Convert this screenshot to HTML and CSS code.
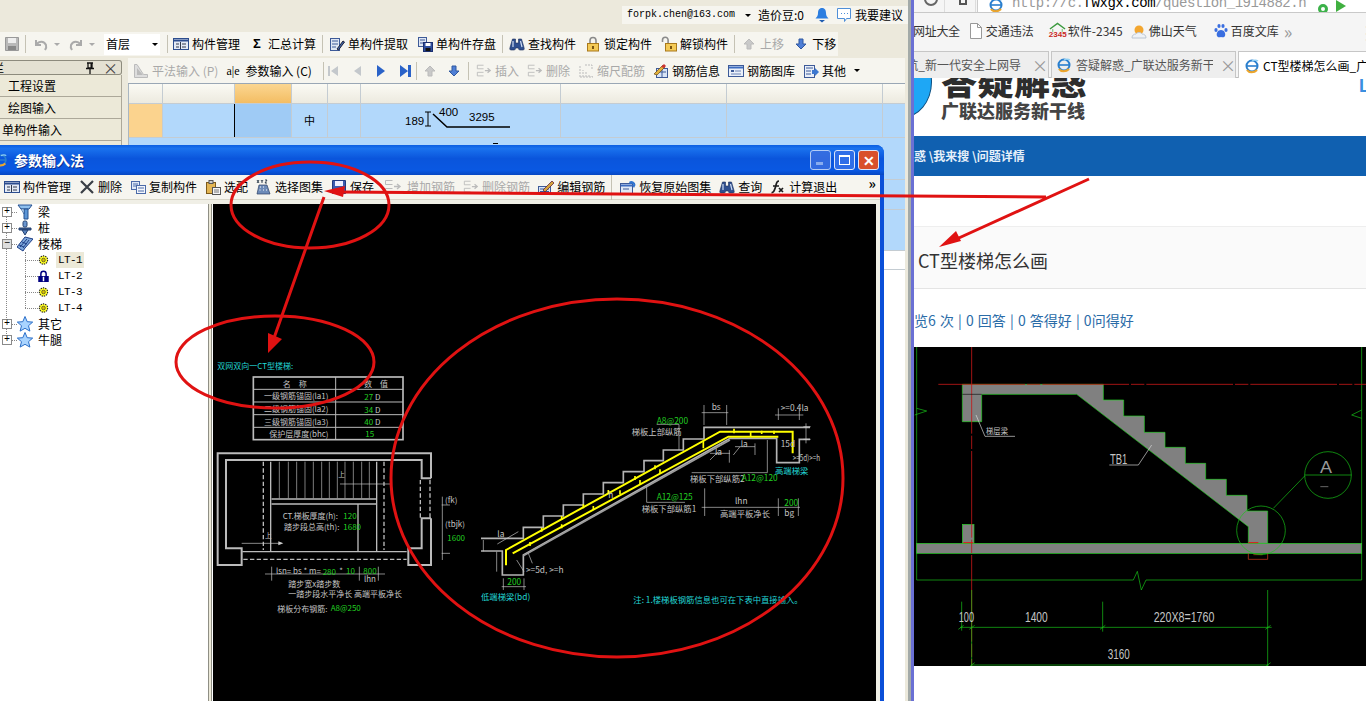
FILE: index.html
```html
<!DOCTYPE html>
<html lang="zh-CN">
<head>
<meta charset="utf-8">
<title>参数输入法</title>
<link rel="stylesheet" href="styles.css">
</head>
<body>
<svg class="defs" aria-hidden="true">
  <symbol id="i-table" viewBox="0 0 16 16"><rect x=".5" y="2.5" width="15" height="11" fill="#e3eaf6" stroke="#2c4d8e"/><path d="M1 4.500h14" stroke="#2c4d8e" stroke-width="2"/><path d="M3 8h3M3 11h3M9 8h4M9 11h4M7.500 6v7" stroke="#30384a"/></symbol>
  <symbol id="i-disk" viewBox="0 0 16 16"><path d="M1.500 1.500h13v13h-13z" fill="#b9b9b9" stroke="#999"/><rect x="4" y="2" width="8" height="5" fill="#eee"/><rect x="4" y="10" width="8" height="4" fill="#888"/></symbol>
  <symbol id="i-disk2" viewBox="0 0 16 16"><path d="M1.500 1.500h13v13h-13z" fill="#3c5cb0" stroke="#223a80"/><rect x="4" y="2" width="8" height="5" fill="#eef"/><rect x="4" y="10" width="8" height="4" fill="#222"/></symbol>
  <symbol id="i-undo" viewBox="0 0 16 16"><path d="M3 4v5h5M3.500 8.500C6 5 11 4.500 13 9c.7 2 0 3.500-1 5" fill="none" stroke="#aaa" stroke-width="2"/></symbol>
  <symbol id="i-redo" viewBox="0 0 16 16"><path d="M13 4v5H8M12.500 8.500C10 5 5 4.500 3 9c-.7 2 0 3.500 1 5" fill="none" stroke="#aaa" stroke-width="2"/></symbol>
  <symbol id="i-extract" viewBox="0 0 16 16"><rect x="1.500" y="2.500" width="9" height="12" fill="#dfe6f3" stroke="#3d5a98"/><path d="M3 5h6M3 8h6M3 11h4" stroke="#3d5a98"/><path d="M8 13l6-8 1.500 1-6 8z" fill="#3d66b0" stroke="#223"/></symbol>
  <symbol id="i-store" viewBox="0 0 16 16"><rect x="1.500" y="1.500" width="8" height="9" fill="#dfe6f3" stroke="#3d5a98"/><path d="M3 4h5M3 7h5" stroke="#3d5a98"/><rect x="6.500" y="6.500" width="9" height="9" fill="#2f4f9f" stroke="#1c2f70"/><rect x="8.500" y="7" width="5" height="3" fill="#fff"/><rect x="8.500" y="12" width="5" height="3" fill="#111"/></symbol>
  <symbol id="i-bino" viewBox="0 0 16 16"><path d="M2 14c-1.200 0-1.500-1-1-2.500L3.500 3h3v4h3V3h3L15 11.500c.5 1.500.2 2.500-1 2.500h-3c-1.200 0-1.500-1-1.500-2h-3c0 1-.3 2-1.500 2z" fill="#2f4f8f" stroke="#1b2e58" stroke-width=".6"/><path d="M4 5v6M11.500 5l1.500 6" stroke="#cfdcf2" stroke-width="1.200"/></symbol>
  <symbol id="i-lock" viewBox="0 0 16 16"><path d="M5 8V4.500a3 3 0 0 1 6 0V8" fill="none" stroke="#8a8a8a" stroke-width="1.600"/><rect x="2.500" y="7.500" width="11" height="7.500" fill="#f4ca56" stroke="#a9791b"/><rect x="7" y="10" width="2" height="3" fill="#7b5510"/></symbol>
  <symbol id="i-unlock" viewBox="0 0 16 16"><path d="M1.500 6V4a2.800 2.800 0 0 1 5.600 0v4" fill="none" stroke="#8a8a8a" stroke-width="1.600"/><rect x="4.500" y="7.500" width="11" height="7.500" fill="#f4ca56" stroke="#a9791b"/><rect x="9" y="10" width="2" height="3" fill="#7b5510"/></symbol>
  <symbol id="i-up" viewBox="0 0 16 16"><path d="M8 3l5 5h-3v5H6V8H3z" fill="#c9c9c9" stroke="#bbb"/></symbol>
  <symbol id="i-down" viewBox="0 0 16 16"><path d="M8 13l5-5h-3V3H6v5H3z" fill="#4f7fd6" stroke="#31589f"/></symbol>
  <symbol id="i-plan" viewBox="0 0 16 16"><path d="M1.500 1.500v13h13v-3h-4L4 1.500z" fill="#ddd" stroke="#bbb"/><path d="M4 5l6 7H4z" fill="#bbb"/></symbol>
  <symbol id="i-first" viewBox="0 0 16 16"><path d="M3 3h2v10H3zM13 3v10L6 8z" fill="#c4c8cc"/></symbol>
  <symbol id="i-prev" viewBox="0 0 16 16"><path d="M12 3v10L5 8z" fill="#c4c8cc"/></symbol>
  <symbol id="i-next" viewBox="0 0 16 16"><path d="M4 2v12l8-6z" fill="#2a62c8"/></symbol>
  <symbol id="i-last" viewBox="0 0 16 16"><path d="M3 2v12l8-6zM11 2h3v12h-3z" fill="#2a62c8"/></symbol>
  <symbol id="i-insert" viewBox="0 0 18 16"><path d="M1.500 1.500h7M1.500 1.500v4h7M1.500 9.500h7M1.500 9.500v4h7" fill="none" stroke="#bbb"/><path d="M10 7.500h6M13 5l3 2.500-3 2.500" fill="none" stroke="#bbb" stroke-width="1.400"/></symbol>
  <symbol id="i-scale" viewBox="0 0 16 16"><path d="M2 14V3M5 14V7M8 14V9M11 14v-3M14 14v-1M2 14h13M7 2h7v5" fill="none" stroke="#bbb" stroke-dasharray="2 1"/></symbol>
  <symbol id="i-info" viewBox="0 0 16 16"><rect x="3.500" y="5.500" width="11" height="9" fill="#d8e4f6" stroke="#3d5a98"/><path d="M5 9h8M9 6v8" stroke="#3d5a98"/><path d="M1 11l9-9 2 2-8 8z" fill="#e2b23c" stroke="#6b4a12" stroke-width=".7"/><path d="M8 4l3-3 2 2-2 2z" fill="#c33"/></symbol>
  <symbol id="i-lib" viewBox="0 0 16 16"><rect x=".5" y="2.500" width="15" height="11" fill="#e9eff9" stroke="#3d5a98"/><path d="M1 4.500h14" stroke="#3d6cc0" stroke-width="2"/><rect x="3" y="7" width="3" height="2" fill="#3d5a98"/><path d="M7 8h6M3 11h10" stroke="#6d83b5"/></symbol>
  <symbol id="i-other" viewBox="0 0 16 16"><rect x="1.500" y="2.500" width="10" height="12" fill="#e9eff9" stroke="#3d5a98"/><path d="M3 5h7M3 8h5M3 11h5" stroke="#3d5a98"/><path d="M9 7h3V5l4 4-4 4v-2H9z" fill="#3d78d0"/></symbol>
  <symbol id="i-x" viewBox="0 0 16 16"><path d="M2 2l12 12M14 2L2 14" stroke="#3a3f46" stroke-width="2.200"/></symbol>
  <symbol id="i-copy" viewBox="0 0 16 16"><rect x="1.500" y="2.500" width="8" height="8" fill="#dfe8f6" stroke="#4b6aa8"/><path d="M3 5h5M3 7h5" stroke="#4b6aa8"/><rect x="6.500" y="6.500" width="9" height="8" fill="#f3f6fc" stroke="#4b6aa8"/><path d="M8 9h6M8 12h6" stroke="#4b6aa8"/></symbol>
  <symbol id="i-clip" viewBox="0 0 16 16"><rect x="1.500" y="3.500" width="9" height="11" fill="#e3b552" stroke="#7d5a1a"/><rect x="4" y="1.500" width="4" height="3" fill="#ccc" stroke="#555"/><rect x="7.500" y="8.500" width="8" height="7" fill="#f5f5f5" stroke="#555"/><path d="M9 11h5M9 13h5" stroke="#777"/></symbol>
  <symbol id="i-xyz" viewBox="0 0 16 16"><path d="M1 1l2 3M3 1L1 4M5 1l1 1.500L7 1M6 2.500V4M9 1h2L9 4h2" fill="none" stroke="#234" stroke-width=".9"/><path d="M3 6h8l3 9H1z" fill="#6d8bb8" stroke="#2c4165" stroke-width=".7"/><path d="M4 8h1M7 8h1M3.500 11h1M7 11h1M10 11h1" stroke="#fff"/></symbol>
  <symbol id="i-edit" viewBox="0 0 16 16"><rect x=".5" y="7.500" width="12" height="7" fill="#d8e4f6" stroke="#3d5a98"/><path d="M2 10h9M2 12.500h9" stroke="#3d5a98"/><path d="M5 11l9-9 2 2-9 9z" fill="#d4a43c" stroke="#513" stroke-width=".7"/></symbol>
  <symbol id="i-restore" viewBox="0 0 16 16"><rect x=".5" y="4.500" width="12" height="10" fill="#dfe8f6" stroke="#3d5a98"/><path d="M1 6.500h11" stroke="#3d6cc0" stroke-width="2"/><path d="M3 10h6" stroke="#3d5a98"/><path d="M9 3a4 4 0 0 1 6.500 3L14 9 12 6h1.500A2.500 2.500 0 0 0 10 5z" fill="#2f74d0"/></symbol>
  <symbol id="i-fx" viewBox="0 0 16 16"><path d="M9 2c-3 0-2.500 3-3.500 6S4 14 1.500 13.500M3 7h6M9 9l4 4M13 9l-4 4" fill="none" stroke="#1d1d1d" stroke-width="1.700"/></symbol>
  <symbol id="i-bell" viewBox="0 0 14 16"><path d="M7 1c3 0 4 2.500 4 5s1 4 2.500 5.500h-13C2 10 3 8.500 3 6s1-5 4-5z" fill="#2c7ee0"/><path d="M4 13h6l-3 2.500z" fill="#1e5cb0"/></symbol>
  <symbol id="i-chat" viewBox="0 0 16 16"><path d="M1.500 1.500h13v10h-4l-2 3v-3h-7z" fill="#fff" stroke="#4f8fd8"/><path d="M5 6.500h1M8 6.500h1M11 6.500h1" stroke="#4f8fd8"/></symbol>
  <symbol id="i-pin" viewBox="0 0 10 12"><path d="M2 1h6M3 1v5h4V1M1 6.500h8M5 7v5" fill="none" stroke="#111" stroke-width="1.300"/><rect x="5.500" y="1" width="1.500" height="5" fill="#111"/></symbol>
  <symbol id="i-ie" viewBox="0 0 16 16"><circle cx="8" cy="8" r="5.500" fill="none" stroke="#2a7fce" stroke-width="2"/><path d="M2 8h12" stroke="#2a7fce" stroke-width="1.600"/><path d="M3 12c2 3 7 3 10 0" fill="none" stroke="#eca52c" stroke-width="2.200"/><path d="M14 3C12 1.500 10 2 8 3" fill="none" stroke="#8fd0f5" stroke-width="1.400"/></symbol>
  <symbol id="i-gear" viewBox="0 0 12 12"><circle cx="6" cy="6" r="4.500" fill="#ffff22" stroke="#222" stroke-width="1.200" stroke-dasharray="1.500 1"/><circle cx="6" cy="6" r="2" fill="#d8c000" stroke="#333" stroke-width=".7"/></symbol>
  <symbol id="i-tlock" viewBox="0 0 14 16"><path d="M3.500 8V5a3.500 3.500 0 0 1 7 0v3" fill="none" stroke="#000080" stroke-width="2"/><rect x="0" y="8" width="14" height="8" fill="#000080"/><rect x="6" y="9" width="2" height="6" fill="#fff"/></symbol>
  <symbol id="i-star" viewBox="0 0 16 16"><path d="M8 .5l2.200 5.200 5.500.4-4.200 3.600 1.400 5.400L8 12.300l-4.900 2.800 1.400-5.400L.3 6.100l5.500-.4z" fill="#a9d4ff" stroke="#2a6ec8"/></symbol>
  <symbol id="i-beam" viewBox="0 0 16 16"><path d="M1 1h14l-3 4H4z" fill="#8fc0ee" stroke="#24508f"/><path d="M7 5h4v10H7z" fill="#5b95d6" stroke="#24508f"/><path d="M4 5l3 5V5z" fill="#cfe4f8" stroke="#24508f" stroke-width=".6"/></symbol>
  <symbol id="i-pile" viewBox="0 0 16 16"><rect x="6" y="1" width="4" height="6" rx="1.500" fill="#6a96d0" stroke="#24406f"/><path d="M2 8h12v2H2z" fill="#36578f" stroke="#24406f"/><path d="M5 10h6l-3 5z" fill="#5b85c0" stroke="#24406f"/></symbol>
  <symbol id="i-stair" viewBox="0 0 16 16"><path d="M0 11l8-10 8 2-8 9-2 3z" fill="#7fa8dc" stroke="#1f3f86"/><path d="M3 11l7-8M6 12l6-8M2 9l5 2M5 6l5 2" stroke="#1f3f86" fill="none"/></symbol>
  <symbol id="i-house" viewBox="0 0 18 16"><path d="M1 7l8-6 8 6" fill="none" stroke="#3b9a3e" stroke-width="1.500"/><path d="M4 7v3M14 7v3" stroke="#6b6"/></symbol>
  <symbol id="i-sun" viewBox="0 0 16 16"><circle cx="8" cy="7" r="4.500" fill="#f3a62f"/><path d="M1 15c0-3 2-4 4-4 1-2 5-2 6 0 2 0 4 1 4 4z" fill="#eef2f7" stroke="#bcc6d2"/></symbol>
  <symbol id="i-paw" viewBox="0 0 16 16"><g fill="#3a6ee0"><ellipse cx="3" cy="7" rx="1.600" ry="2"/><ellipse cx="6" cy="3" rx="1.600" ry="2"/><ellipse cx="10" cy="3" rx="1.600" ry="2"/><ellipse cx="13" cy="7" rx="1.600" ry="2"/><path d="M8 7c3 0 5 3 4 6-1 2-3 1-4 1s-3 1-4-1c-1-3 1-6 4-6z"/></g></symbol>
  <symbol id="i-doc" viewBox="0 0 12 16"><path d="M.5 .5h7l4 4v11H.5z" fill="#fff" stroke="#999"/><path d="M7.500 .5v4h4" fill="none" stroke="#999"/></symbol>
</svg>

<div class="desktop">
  <section class="app">
    <div class="app-top">
      <div class="account">
        <span class="mono">forpk.chen@163.com</span><span class="caret"></span>
        <span class="bean">造价豆:0</span>
        <svg class="ic-bell"><use href="#i-bell"/></svg>
        <svg class="ic"><use href="#i-chat"/></svg>
        <span class="advice">我要建议</span>
      </div>
    </div>

    <div class="toolbar main-bar">
      <svg class="ic"><use href="#i-disk"/></svg><i class="sep sep-first"></i>
      <svg class="ic"><use href="#i-undo"/></svg><span class="caret off"></span>
      <svg class="ic"><use href="#i-redo"/></svg><span class="caret off"></span>
      <span class="combo">首层<span class="caret"></span></span><i class="sep sep-combo"></i>
      <span class="ti"><svg class="ic"><use href="#i-table"/></svg>构件管理</span>
      <span class="ti"><b class="sigma">Σ</b>汇总计算</span><i class="sep"></i>
      <span class="ti"><svg class="ic"><use href="#i-extract"/></svg>单构件提取</span>
      <span class="ti"><svg class="ic"><use href="#i-store"/></svg>单构件存盘</span><i class="sep"></i>
      <span class="ti"><svg class="ic"><use href="#i-bino"/></svg>查找构件</span>
      <span class="ti"><svg class="ic"><use href="#i-lock"/></svg>锁定构件</span>
      <span class="ti"><svg class="ic"><use href="#i-unlock"/></svg>解锁构件</span><i class="sep"></i>
      <span class="ti off"><svg class="ic"><use href="#i-up"/></svg>上移</span>
      <span class="ti"><svg class="ic"><use href="#i-down"/></svg>下移</span>
    </div>

    <div class="work">
      <aside class="side">
        <div class="side-head"><span class="side-cut">栏</span><svg class="pin"><use href="#i-pin"/></svg><span class="side-x">×</span></div>
        <div class="side-row">工程设置</div>
        <div class="side-row">绘图输入</div>
        <div class="side-row side-row-tight">单构件输入</div>
        <div class="side-row"></div>
      </aside>
      <div class="rebar">
        <div class="toolbar sub-bar">
          <span class="ti off"><svg class="ic"><use href="#i-plan"/></svg>平法输入 (P)</span>
          <span class="ti"><span class="ae">a|e</span>参数输入 (C)</span><i class="sep sep-a"></i>
          <svg class="ic"><use href="#i-first"/></svg>
          <svg class="ic"><use href="#i-prev"/></svg>
          <svg class="ic"><use href="#i-next"/></svg>
          <svg class="ic"><use href="#i-last"/></svg><i class="sep sep-b"></i>
          <svg class="ic"><use href="#i-up"/></svg>
          <svg class="ic"><use href="#i-down"/></svg><i class="sep sep-c"></i>
          <span class="ti off"><svg class="ic-w"><use href="#i-insert"/></svg>插入</span>
          <span class="ti off"><svg class="ic-w"><use href="#i-insert"/></svg>删除</span>
          <span class="ti off"><svg class="ic"><use href="#i-scale"/></svg>缩尺配筋</span>
          <span class="ti"><svg class="ic"><use href="#i-info"/></svg>钢筋信息</span>
          <span class="ti"><svg class="ic"><use href="#i-lib"/></svg>钢筋图库</span>
          <span class="ti"><svg class="ic"><use href="#i-other"/></svg>其他<span class="caret"></span></span>
        </div>
        <div class="grid">
          <div class="g-row g-head">
            <span class="c c1"></span><span class="c c2"></span><span class="c c3 c-hot"></span><span class="c c4"></span><span class="c c5"></span><span class="c c6"></span><span class="c c7"></span><span class="c c8"></span><span class="c c9"></span>
          </div>
          <div class="g-row g-sel">
            <span class="c c1 c-hot"></span><span class="c c2 c-cur"></span><span class="c c3 c-sel"></span><span class="c c4 c-mid">中</span><span class="c c5"></span>
            <span class="c c6 shape">
              <svg class="shape-svg" viewBox="0 0 200 34"><path d="M67 8v14M64 8h6M64 22h6" fill="none" stroke="#000"/><path d="M72 10l14 13h63" fill="none" stroke="#000" stroke-width="1.500"/><text x="44" y="21">189</text><text x="78" y="12">400</text><text x="108" y="17">3295</text></svg>
            </span>
            <span class="c c7"></span><span class="c c8"></span><span class="c c9"></span>
          </div>
          <div class="g-row g-blue g-r2"><i class="g-mark"></i></div>
          <div class="g-row g-blue g-r3"></div>
          <div class="g-row g-blue g-r4"></div>
          <div class="g-row g-r5"></div>
        </div>
      </div>
    </div>
  </section>

  <div class="splitter"></div>

  <section class="browser">
    <div class="addr">
      <span class="addr-btn"><span class="reload"></span></span>
      <span class="addr-btn"><span class="home"></span></span>
      <div class="url">
        <svg class="ic"><use href="#i-ie"/></svg>
        <span class="url-text">http://c.<b>fwxgx.com</b>/question_1914882.h</span>
        <span class="url-ok"></span><span class="url-go"></span>
      </div>
    </div>
    <div class="marks">
      <span class="mk mk-first">网址大全</span>
      <span class="mk"><svg class="ic-doc"><use href="#i-doc"/></svg>交通违法</span>
      <span class="mk"><span class="mk-2345"><svg class="ic-w"><use href="#i-house"/></svg><em>2345</em></span>软件-2345</span>
      <span class="mk"><svg class="ic"><use href="#i-sun"/></svg>佛山天气</span>
      <span class="mk"><svg class="ic"><use href="#i-paw"/></svg>百度文库</span>
      <span class="mk-more">»</span>
      <span class="mk-dots">⋮</span>
    </div>
    <div class="tabs">
      <div class="tab tab-a"><span class="tab-text tab-clip">导航_新一代安全上网导</span><span class="tab-x">×</span></div>
      <div class="tab tab-b"><svg class="ic"><use href="#i-ie"/></svg><span class="tab-text">答疑解惑_广联达服务新干</span><span class="tab-x">×</span></div>
      <div class="tab tab-c"><svg class="ic"><use href="#i-ie"/></svg><span class="tab-text">CT型楼梯怎么画_广联达</span></div>
    </div>
    <div class="page">
      <header class="logo">
        <span class="logo-ball"></span>
        <div class="logo-text">
          <div class="logo-big">答疑解惑</div>
          <div class="logo-small">广联达服务新干线</div>
        </div>
        <span class="logo-l">L</span>
      </header>
      <nav class="crumb">答疑解惑 \我来搜 \问题详情</nav>
      <h1 class="q-title">CT型楼梯怎么画</h1>
      <p class="q-stats">浏览6 次 | 0 回答 | 0 答得好 | 0问得好</p>
      <svg class="web-cad" viewBox="12 21 1356 957" role="img" aria-label="楼梯剖面图">
        <g fill="none" stroke="#18c818" stroke-width="2">
          <path d="M20 21V720H670l12-26 12 56 14-30H1355V21"/>
          <path d="M20 205l30 8-36 12M1355 210l-30 15 30 10"/>
        </g>
        <path d="M157 133H580V180H641V228H703V277H765V322H826V370H887V418H949V466H1011V513H1073V610H1015V560L500 163H215V245H157Z" fill="#808080" stroke="#22d022" stroke-width="2"/>
        <rect x="20" y="610" width="1335" height="30" fill="#808080" stroke="#22d022" stroke-width="2"/>
        <rect x="157" y="553" width="35" height="57" fill="#808080" stroke="#22d022" stroke-width="2"/>
        <path d="M85 133H1368M185 21V980" stroke="#c01818" stroke-width="2.500" stroke-dasharray="260 6 40 6"/>
        <path d="M157 163h58" stroke="#111" stroke-width="2"/>
        <path d="M160 608h30M1015 608h30" stroke="#e01818" stroke-width="3"/>
        <path d="M1015 640v18h58v-18M1030 644h28" fill="none" stroke="#e04020" stroke-width="2"/>
        <g fill="none" stroke="#18c818" stroke-width="2">
          <circle cx="1053" cy="571" r="73"/>
          <circle cx="1254" cy="405" r="70"/>
          <path d="M1184 405H1324M1184 408L1090 505"/>
          <path d="M150 862H1085M185 975H1075M185 750V985M578 785V875M1073 750V985M155 785V872M145 868l16-12M178 868l16-12M570 868l16-12M1066 868l16-12M178 980l16-12M1066 980l16-12"/>
        </g>
        <g fill="none" stroke="#ddd" stroke-width="2">
          <path d="M198 225L225 289H315M598 375H685L725 315"/>
          <path d="M1231 440h24" stroke="#999"/>
        </g>
        <g class="wc-text">
          <text x="228" y="282" class="wc-cn" textLength="66" lengthAdjust="spacingAndGlyphs">梯层梁</text>
          <text x="600" y="372" textLength="52" lengthAdjust="spacingAndGlyphs">TB1</text>
          <text x="1230" y="398" class="wc-a" textLength="36" lengthAdjust="spacingAndGlyphs">A</text>
          <text x="146" y="845" textLength="46" lengthAdjust="spacingAndGlyphs">100</text>
          <text x="345" y="845" textLength="68" lengthAdjust="spacingAndGlyphs">1400</text>
          <text x="731" y="845" textLength="182" lengthAdjust="spacingAndGlyphs">220X8=1760</text>
          <text x="593" y="956" textLength="66" lengthAdjust="spacingAndGlyphs">3160</text>
        </g>
      </svg>
    </div>
  </section>

  <section class="dialog">
    <header class="d-title">
      <svg class="d-logo"><use href="#i-ie"/></svg>
      <span class="d-name">参数输入法</span>
      <span class="d-btns">
        <span class="d-btn d-min"><i></i></span>
        <span class="d-btn d-max"><i></i></span>
        <span class="d-btn d-close">✕</span>
      </span>
    </header>
    <div class="d-body">
      <div class="toolbar d-bar">
        <span class="ti"><svg class="ic"><use href="#i-table"/></svg>构件管理</span>
        <span class="ti"><svg class="ic"><use href="#i-x"/></svg>删除</span>
        <span class="ti"><svg class="ic"><use href="#i-copy"/></svg>复制构件</span>
        <span class="ti"><svg class="ic"><use href="#i-clip"/></svg>选配</span>
        <span class="ti"><svg class="ic"><use href="#i-xyz"/></svg>选择图集</span>
        <span class="ti"><svg class="ic"><use href="#i-disk2"/></svg>保存</span>
        <span class="ti off"><svg class="ic-w ic-add"><use href="#i-insert"/></svg>增加钢筋</span>
        <span class="ti off"><svg class="ic-w ic-del"><use href="#i-insert"/></svg>删除钢筋</span>
        <span class="ti"><svg class="ic"><use href="#i-edit"/></svg>编辑钢筋</span><i class="sep sep-tall"></i>
        <span class="ti"><svg class="ic"><use href="#i-restore"/></svg>恢复原始图集</span>
        <span class="ti"><svg class="ic"><use href="#i-bino"/></svg>查询</span>
        <span class="ti"><svg class="ic"><use href="#i-fx"/></svg>计算退出</span>
        <span class="more">»</span>
      </div>
      <div class="d-main">
        <ul class="tree">
          <li class="t-vline t-vline-a"></li>
          <li class="t-vline t-vline-b"></li>
          <li class="t-row"><i class="exp">+</i><i class="dots"></i><svg class="ic"><use href="#i-beam"/></svg><span class="t-name">梁</span></li>
          <li class="t-row"><i class="exp">+</i><i class="dots"></i><svg class="ic"><use href="#i-pile"/></svg><span class="t-name">桩</span></li>
          <li class="t-row"><i class="exp exp-open">−</i><i class="dots"></i><svg class="ic"><use href="#i-stair"/></svg><span class="t-name">楼梯</span></li>
          <li class="t-row t-leaf"><i class="leaf-dots"></i><svg class="ic-g"><use href="#i-gear"/></svg><span class="t-mono t-on">LT-1</span></li>
          <li class="t-row t-leaf"><i class="leaf-dots"></i><svg class="ic-g"><use href="#i-tlock"/></svg><span class="t-mono">LT-2</span></li>
          <li class="t-row t-leaf"><i class="leaf-dots"></i><svg class="ic-g"><use href="#i-gear"/></svg><span class="t-mono">LT-3</span></li>
          <li class="t-row t-leaf"><i class="leaf-dots"></i><svg class="ic-g"><use href="#i-gear"/></svg><span class="t-mono">LT-4</span></li>
          <li class="t-row"><i class="exp">+</i><i class="dots"></i><svg class="ic"><use href="#i-star"/></svg><span class="t-name">其它</span></li>
          <li class="t-row"><i class="exp">+</i><i class="dots"></i><svg class="ic"><use href="#i-star"/></svg><span class="t-name">牛腿</span></li>
        </ul>
        <div class="sash"></div>
        <div class="canvas">
          <svg class="cad" viewBox="213 204 663 497" role="img" aria-label="双网双向CT型楼梯配筋图">
            <g transform="translate(210 350) scale(.33333)">
              <text x="22" y="56" class="ct-c" font-size="24">双网双向一CT型楼梯:</text>
              <g fill="none" stroke="#bbb">
                <rect x="130" y="81" width="449" height="188" stroke-width="5"/>
                <path d="M130 118H579M130 156H579M130 194H579M130 232H579M377 81V269" stroke-width="3"/>
              </g>
              <g class="ct-w" font-size="24">
                <text x="218" y="112">名　称</text><text x="462" y="112">数　值</text>
                <text x="162" y="148">一级钢筋锚固(la1)</text>
                <text x="162" y="186">二级钢筋锚固(la2)</text>
                <text x="162" y="224">三级钢筋锚固(la3)</text>
                <text x="178" y="262">保护层厚度(bhc)</text>
                <text x="495" y="150">D</text><text x="495" y="188">D</text><text x="495" y="226">D</text>
              </g>
              <g class="ct-g" font-size="24">
                <text x="463" y="150">27</text><text x="463" y="188">34</text><text x="463" y="226">40</text><text x="466" y="262">15</text>
              </g>
              <g fill="none" stroke="#bbb" stroke-width="6">
                <path d="M663 385V310H23V645H95V595H48V330H635V385H663"/>
                <path d="M663 505V645H595V595H635V505H663"/>
              </g>
              <g fill="none" stroke="#bbb" stroke-width="4">
                <path d="M160 335V600M522 335V600M631 390V505M660 390V505M100 628H590" stroke-dasharray="13 7"/>
                <path d="M182 335V605M500 335V605M185 447H500M185 462H500M444 462V605M97 605H590"/>
              </g>
              <path d="M208 335V445M235 335V445M260 335V445M285 335V445M310 335V445M335 335V445M358 335V445M382 335V445M405 335V445M430 335V445M455 335V445M478 335V445" stroke="#bbb" stroke-width="2"/>
              <path d="M95 580H215M390 402H540M165 672H525M185 650V692M448 650V692M505 650V692" stroke="#ccc" stroke-width="2"/>
              <path d="M205 574l15 6-15 6z" fill="#ccc"/>
              <path d="M695 465H720M695 610H720M697 440V630" stroke="#ccc" stroke-width="2"/>
              <g class="ct-w" font-size="24">
                <text x="385" y="382" font-size="20">上</text><text x="165" y="564" font-size="20">上</text>
                <text x="218" y="507">CT.梯板厚度(h):</text><text x="222" y="540">踏步段总高(th):</text>
                <text x="198" y="672">lsn= bs * m=</text><text x="388" y="672">*</text>
                <text x="462" y="697">lhn</text>
                <text x="235" y="712">踏步宽x踏步数</text>
                <text x="235" y="742">一踏步段水平净长 高端平板净长</text>
                <text x="202" y="787">梯板分布钢筋:</text>
                <text x="705" y="460">(fk)</text><text x="705" y="530">(tbjk)</text>
              </g>
              <g class="ct-g" font-size="24">
                <text x="400" y="507">120</text><text x="400" y="540">1680</text>
                <text x="338" y="674">280</text><text x="408" y="672">10</text><text x="460" y="672">800</text>
                <text x="362" y="784">A8@250</text>
                <text x="712" y="572">1600</text>
              </g>
            </g>
            <g transform="translate(470 390) scale(.33333)">
              <path d="M33 445H160V412H220V378H280V345H340V312H400V278H460V245H522V212H580V180H640V147H702V112H1020M33 483H97V555H160V495L780 145H920V218H988V148H1020" fill="none" stroke="#b4b4b4" stroke-width="5"/>
              <path d="M160 497L780 150" stroke="#9c9c9c" stroke-width="5"/>
              <path d="M108 526V480L750 125H968V190" fill="none" stroke="#ffff00" stroke-width="6"/>
              <path d="M128 490L775 140H925" fill="none" stroke="#ffff00" stroke-width="6"/>
              <path d="M215 425v-12M275 390v-12M340 355v-12M415 312v-12M495 270v-12M555 238v-12M700 165v-12M792 130v-14M842 140v-14M875 132v-10M912 132v-10M180 468v-12M275 415v-12M370 360v-12M450 313v-12M510 282v-12M570 250v-12M700 175v-12" stroke="#ffff00" stroke-width="5"/>
              <g fill="none" stroke="#c8c8c8" stroke-width="2">
                <path d="M695 68H775M702 45V105M770 45V105M915 75H1000M925 55V90M988 55V90M1000 110H1022M1000 148H1022M1008 100V160M40 450V484M80 485V545M95 590H168M100 565V600M162 565V600"/>
                <path d="M560 103H627V180M665 248H892V150M530 290V337H645M695 352H990M704 295V378M925 325V378M985 325V378M720 190H780M795 170H855M778 180V218M855 160V195M720 210l25-25M790 195l20-25M82 462L145 425M140 510l22 35M175 490l12 30"/>
              </g>
              <g class="ct-w" font-size="25">
                <text x="725" y="60">bs</text><text x="932" y="62">&gt;=0.4la</text>
                <text x="485" y="136">梯板上部纵筋</text><text x="932" y="172">15d</text>
                <text x="968" y="214" textLength="82" lengthAdjust="spacingAndGlyphs">&gt;=5d)&gt;=h</text>
                <text x="735" y="194">la</text><text x="812" y="170">la</text>
                <text x="660" y="276">梯板下部纵筋2</text>
                <text x="795" y="342">lhn</text><text x="750" y="381">高端平板净长</text><text x="943" y="378">bg</text>
                <text x="515" y="366">梯板下部纵筋1</text>
                <text x="82" y="440">la</text><text x="168" y="549">&gt;=5d, &gt;=h</text>
                <text x="415" y="325">h</text>
              </g>
              <g class="ct-g" font-size="25">
                <text x="560" y="102">A8@200</text><text x="815" y="273">A12@120</text>
                <text x="560" y="331">A12@125</text><text x="943" y="348">200</text><text x="112" y="586">200</text>
              </g>
              <g class="ct-c" font-size="25">
                <text x="915" y="253">高端梯梁</text>
                <text x="33" y="630">低端梯梁(bd)</text>
                <text x="490" y="640">注: 1.楼梯板钢筋信息也可在下表中直接输入。</text>
              </g>
            </g>
          </svg>
        </div>
      </div>
    </div>
  </section>

  <svg class="notes" viewBox="0 0 1366 701" aria-hidden="true">
    <g fill="none" stroke="#e01212" stroke-width="3">
      <ellipse cx="310" cy="205" rx="79" ry="43"/>
      <ellipse cx="275" cy="362" rx="99" ry="46"/>
      <ellipse cx="617" cy="478" rx="226" ry="179"/>
      <path d="M1046 197L340 192M1089 179L950 242M324 197L274 338"/>
    </g>
    <path d="M324 191L345 186L343 197ZM939 247L956 231L961 241ZM268 353L268 333L282 339Z" fill="#e01212"/>
  </svg>
</div>
</body>
</html>
```

FILE: styles.css
```css
* { box-sizing: border-box; }
html, body { margin: 0; padding: 0; }
body { width: 1366px; height: 701px; overflow: hidden; background: #fff; font: 12px/16px "Noto Sans CJK SC", "Liberation Sans", sans-serif; color: #000; }
.defs { position: absolute; width: 0; height: 0; }
svg text { font-family: "Noto Sans CJK SC", "Liberation Sans", sans-serif; }
.desktop { position: relative; display: flex; width: 1366px; height: 701px; overflow: hidden; }

/* main application */
.app { width: 908px; flex: none; display: flex; flex-direction: column; background: #ece9dc; }
.app-top { height: 32px; padding: 6px 0 0 622px; }
.account { display: flex; align-items: center; height: 18px; padding-left: 5px; background: #f6f5ef; }
.mono { font: 10px/16px "Liberation Mono", monospace; width: 113px; white-space: nowrap; }
.bean { margin-left: 7px; width: 50px; }
.ic-bell { width: 14px; height: 16px; margin: 0 7px 0 7px; flex: none; }
.advice { margin-left: 3px; }
.caret { display: inline-block; width: 0; height: 0; margin-left: 5px; border: 3px solid transparent; border-top: 3px solid #000; border-bottom: 0; vertical-align: middle; flex: none; }
.caret.off { border-top-color: #aaa; }

.toolbar { display: flex; align-items: center; white-space: nowrap; }
.ic { width: 16px; height: 16px; flex: none; }
.ic-w { width: 16px; height: 16px; flex: none; }
.ti { display: flex; align-items: center; gap: 3px; }
.ti.off { color: #a9a9a9; }
.sep { width: 1px; height: 18px; background: #c5c2b4; flex: none; }
.sep-tall { height: 25px; }

.main-bar { width: 838px; height: 24px; gap: 9px; padding-left: 4px; background: #f6f5ef; }
.main-bar > .caret { margin: 0 -1px 0 -4px; }
.main-bar .sep { margin: 0 -3px; }
.main-bar .sep-first { margin: 0 -2px 0 -4px; }
.main-bar .sep-combo { margin: 0 -4px 0 0; }
.combo { display: flex; align-items: center; justify-content: space-between; width: 56px; height: 21px; margin: 0 -2px 0 1px; padding: 0 2px; background: #fff; }
.sigma { width: 16px; text-align: center; font: bold 13px/16px "Liberation Sans", sans-serif; }

.work { flex: 1; display: flex; min-height: 0; padding-top: 2px; }
.side { width: 122px; flex: none; padding-top: 2px; }
.side-head { display: flex; align-items: center; justify-content: space-between; height: 15px; padding-right: 3px; border: 1px solid #8d8b7d; border-left: 0; border-radius: 0 3px 3px 0; background: #e4e1d2; overflow: hidden; }
.side-cut { margin-left: -8px; }
.pin { width: 10px; height: 12px; margin-left: auto; margin-right: 8px; flex: none; }
.side-x { font-size: 15px; color: #444; }
.side-row { height: 22px; padding: 3px 0 0 8px; border-bottom: 1px solid #aca899; border-right: 1px solid #aca899; background: #ece9d8; }
.side-row-tight { padding-left: 2px; }

.rebar { width: 777px; margin-left: 6px; flex: none; display: flex; flex-direction: column; }
.sub-bar { height: 26px; gap: 8px; padding-left: 5px; background: #f6f5ef; border-bottom: 1px solid #9aa7b5; }
.sub-bar .sep-a { margin: 0 -7px 0 3px; }
.sub-bar .sep-b { margin: 0 -3px 0 -5px; }
.sub-bar .sep-c { margin: 0 -1px 0 -2px; }
.ae { width: 16px; font: 12px/16px "Liberation Serif", serif; }
.grid { flex: 1; background: #fff; border-left: 1px solid #a9b6c2; }
.g-row { display: flex; border-bottom: 1px solid #c4ccd2; }
.c { flex: none; border-right: 1px solid #c4ccd2; }
.c1 { width: 34px; } .c2 { width: 72px; } .c3 { width: 57px; } .c4 { width: 36px; } .c5 { width: 33px; }
.c6 { width: 200px; } .c7 { width: 166px; } .c8 { width: 156px; } .c9 { width: 22px; border-right: 0; }
.g-head { height: 20px; background: linear-gradient(#fbfaf4, #eceadf); }
.g-head .c-hot { background: linear-gradient(#fbd691, #f3bd63); }
.g-sel { height: 34px; background: #b2d8fb; }
.g-sel .c-hot { background: #fbd38e; }
.c-cur { border-right: 1px solid #000; }
.c-sel { background: #9fcbf5; }
.c-mid { text-align: center; line-height: 32px; font-size: 11px; }
.shape-svg { display: block; width: 200px; height: 34px; }
.shape-svg text { font: 11.500px "Liberation Sans", sans-serif; }
.g-blue { background: #b2d8fb; }
.g-r2 { height: 42px; } .g-r3 { height: 30px; } .g-r4 { height: 41px; }
.g-r5 { height: 19px; }
.g-mark { display: block; width: 5px; height: 1px; margin: 5px 0 0 364px; background: #000; }

.splitter { width: 6px; flex: none; background: linear-gradient(90deg, #a3aaa8 0 3px, #6a70d4 3px 6px); }

/* browser */
.browser { flex: 1; min-width: 0; display: flex; flex-direction: column; overflow: hidden; background: #fff; }
.addr { height: 13px; flex: none; display: flex; align-items: flex-end; overflow: hidden; background: #f5f5f5; border-bottom: 1px solid #c9c9c9; }
.addr-btn { width: 31px; height: 12px; flex: none; position: relative; border-right: 1px solid #ddd; }
.reload { position: absolute; left: 10px; top: -8px; width: 14px; height: 14px; border: 2px solid #666; border-radius: 50%; }
.home { position: absolute; left: 14px; top: -6px; width: 8px; height: 11px; border: 2px solid #555; }
.url { flex: 1; height: 12px; display: flex; align-items: flex-end; margin-left: 1px; padding-left: 10px; background: #fff; border-left: 1px solid #ccc; }
.url .ic { margin-bottom: -1px; }
.url-text { margin: 0 0 0 8px; font: 14px/18px "Liberation Mono", monospace; color: #999; letter-spacing: -.45px; white-space: nowrap; width: 300px; overflow: hidden; flex: none; }
.url-text b { font-weight: normal; color: #000; }
.url-ok { width: 10px; height: 10px; margin: 0 0 -2px 6px; border: 3px solid #3cb24a; border-radius: 50%; flex: none; }
.url-go { width: 0; height: 0; margin: 0 0 0 8px; border: 6px solid transparent; border-left: 10px solid #40b040; flex: none; }
.marks { height: 37px; flex: none; display: flex; align-items: center; padding-bottom: 1px; background: #f5f5f5; color: #333; }
.mk { display: flex; align-items: center; gap: 2px; margin-left: 10px; white-space: nowrap; }
.mk-first { margin-left: -1px; letter-spacing: -.3px; }
.mk:nth-child(3) { margin-left: 15px; }
.mk:nth-child(4) { margin-left: 8px; }
.mk:nth-child(5) { margin-left: 16px; }
.ic-doc { width: 12px; height: 16px; margin-right: 2px; }
.mk-2345 { position: relative; display: block; width: 17px; height: 18px; }
.mk-2345 .ic-w { width: 17px; }
.mk-2345 em { position: absolute; left: 0; top: 8px; font: bold 8px/10px "Liberation Sans", sans-serif; color: #c8281e; }
.mk-more { margin-left: 5px; font-size: 18px; color: #999; }
.mk-dots { margin-left: auto; margin-right: 1px; width: 7px; font-size: 18px; color: #bbb; }
.tabs { height: 28px; flex: none; display: flex; padding-top: 1px; gap: 2px; background: #f5f5f5; border-bottom: 1px solid #bcbcbc; }
.tab { display: flex; align-items: center; height: 27px; padding: 0 5px; flex: none; border: 1px solid #c6c6c6; border-bottom: 0; background: #eeeeee; color: #555; white-space: nowrap; overflow: hidden; }
.tab-text { overflow: hidden; flex: none; }
.tab-a { width: 135px; border-left: 0; padding: 0; }
.tab-clip { width: 107px; margin-right: 6px; direction: rtl; text-align: left; }
.tab-b { width: 185px; gap: 4px; padding-left: 4px; }
.tab-b .tab-text { width: 137px; }
.tab-c { flex: 1; min-width: 0; gap: 3px; height: 28px; background: #fff; color: #000; margin-right: -20px; }
.tab-x { font-size: 16px; color: #999; margin-left: 5px; flex: none; }
.tab-b .tab-x { margin-left: 3px; }
.page { flex: 1; min-height: 0; overflow: hidden; background: #fff; }
.logo { position: relative; height: 58px; display: flex; padding-left: 27px; overflow: hidden; }
.logo-ball { position: absolute; left: -42px; top: -32px; width: 60px; height: 72px; border-radius: 50%; background: #1ea7f5; border: 1px solid #0b4f80; }
.logo-text { margin-top: -17px; font-weight: 900; color: #2d2d2d; }
.logo-big { font-size: 36px; line-height: 36px; letter-spacing: .5px; }
.logo-small { margin-top: 3px; font-size: 18px; line-height: 20px; color: #444; }
.logo-l { position: absolute; right: -4px; top: -1px; font: bold 18px/18px "Liberation Sans", sans-serif; color: #3a8fe0; }
.crumb { height: 40px; background: #1060b0; color: #e6f0fa; font-weight: bold; line-height: 39px; text-indent: -36px; white-space: nowrap; }
.q-title { height: 63px; margin: 50px 0 0; padding: 22px 0 0 4px; background: #fafafa; border-top: 1px solid #eee; border-bottom: 1px solid #e4e4e4; font-size: 18px; font-weight: normal; line-height: 22px; color: #333; }
.q-stats { margin: 22px 0 0; height: 18px; font-size: 14px; line-height: 18px; word-spacing: 1px; color: #2b6ca8; text-indent: -14px; white-space: nowrap; }
.web-cad { display: block; width: 452px; height: 319px; margin-top: 18px; background: #000; }
.wc-text text { font-family: "Liberation Sans", sans-serif; font-size: 44px; fill: #c4c4c4; }
.wc-text .wc-cn { font-family: "Noto Sans CJK SC", sans-serif; font-size: 24px; }
.wc-text .wc-a { font-size: 50px; fill: #999; }

/* dialog window */
.dialog { position: absolute; left: 0; top: 145px; z-index: 2; width: 884px; height: 556px; display: flex; flex-direction: column; background: #0a4fd8; border-radius: 0 8px 0 0; }
.d-title { height: 30px; flex: none; display: flex; align-items: center; padding-right: 5px; border-radius: 0 8px 0 0; background: linear-gradient(#0b5ee2 0, #1a72ee 12%, #0a55dc 45%, #0a58e2 85%, #0747c2 100%); }
.d-logo { width: 14px; height: 16px; margin-left: -6px; }
.d-name { margin-left: 6px; font-size: 14px; font-weight: bold; color: #fff; text-shadow: 1px 1px 0 #0a2f90; }
.d-btns { display: flex; gap: 3px; margin-left: auto; }
.d-btn { position: relative; display: block; width: 21px; height: 20px; border: 1px solid #dce6fa; border-radius: 3px; background: #2f6ee8; color: #fff; text-align: center; line-height: 18px; font-weight: bold; }
.d-min { background: #3c6fe0; opacity: .8; }
.d-min i { position: absolute; left: 5px; bottom: 4px; width: 7px; height: 3px; background: #a9c2f3; }
.d-max i { position: absolute; left: 4px; top: 4px; width: 11px; height: 10px; border: 1px solid #fff; border-top-width: 2px; }
.d-close { background: #d9502c; font-size: 14px; }
.d-body { flex: 1; min-height: 0; display: flex; flex-direction: column; margin-right: 4px; background: #f0efe6; }
.d-bar { height: 25px; gap: 8px; padding-left: 4px; flex: none; background: #f6f5ef; border-bottom: 1px solid #d8d6c8; position: relative; }
.d-bar .ic-add { width: 22px; }
.d-bar .ic-del { width: 16px; }
.d-bar .sep { margin: 0 0 0 -2px; }
.more { position: absolute; right: 4px; top: -1px; font-size: 14px; font-weight: bold; line-height: 18px; }
.d-main { flex: 1; min-height: 0; display: flex; padding-top: 4px; }
.tree { position: relative; width: 208px; flex: none; margin: 0; padding: 0; list-style: none; background: #fff; }
.t-vline { position: absolute; width: 0; border-left: 1px dotted #888; }
.t-vline-a { left: 6px; top: 8px; height: 128px; }
.t-vline-b { left: 25px; top: 48px; height: 56px; }
.t-row { display: flex; align-items: center; height: 16px; padding-left: 2px; }
.exp { display: block; position: relative; width: 10px; height: 10px; border: 1px solid #8a8a8a; font: normal 10px/8px "Liberation Mono", monospace; text-align: center; background: #fff; color: #000; flex: none; }
.exp-open { background: #ddd; }
.dots { width: 5px; border-top: 1px dotted #888; flex: none; }
.t-name { margin-left: 5px; }
.t-leaf { padding-left: 25px; }
.leaf-dots { width: 13px; border-top: 1px dotted #888; height: 1px; flex: none; }
.ic-g { width: 11px; height: 12px; flex: none; }
.t-mono { margin-left: 7px; padding: 0 2px; font: 11px/16px "Liberation Mono", monospace; letter-spacing: -.6px; }
.t-on { background: #ece9d8; }
.sash { width: 5px; flex: none; background: linear-gradient(90deg, #8f8f85 0 1px, #ece9d8 1px 3px, #8f8f85 3px 4px, #fff 4px); }
.canvas { flex: 1; min-width: 0; background: #000; margin-right: 4px; }
.cad { display: block; width: 663px; height: 497px; }
.ct-w text { fill: #c4c4c4; }
.ct-g text { fill: #22d022; }
.ct-c, .ct-c text { fill: #22d6d6; }

/* hand-drawn annotations over the screenshot */
.notes { position: absolute; left: 0; top: 0; z-index: 3; width: 1366px; height: 701px; pointer-events: none; }
```
